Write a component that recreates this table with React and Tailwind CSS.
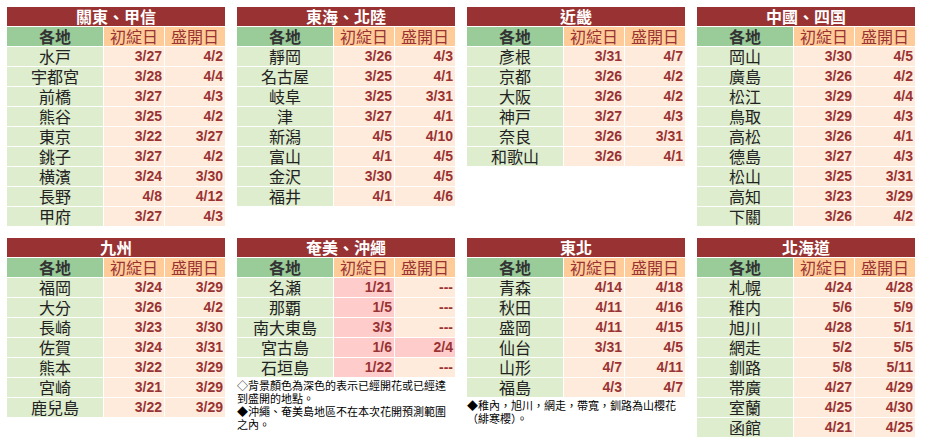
const REGIONS = [
  {
    title: '關東、甲信',
    rows: [
      ['水戸', '3/27', '4/2'],
      ['宇都宮', '3/28', '4/4'],
      ['前橋', '3/27', '4/3'],
      ['熊谷', '3/25', '4/2'],
      ['東京', '3/22', '3/27'],
      ['銚子', '3/27', '4/2'],
      ['横濱', '3/24', '3/30'],
      ['長野', '4/8', '4/12'],
      ['甲府', '3/27', '4/3'],
    ],
  },
  {
    title: '東海、北陸',
    rows: [
      ['靜岡', '3/26', '4/3'],
      ['名古屋', '3/25', '4/1'],
      ['岐阜', '3/25', '3/31'],
      ['津', '3/27', '4/1'],
      ['新潟', '4/5', '4/10'],
      ['富山', '4/1', '4/5'],
      ['金沢', '3/30', '4/5'],
      ['福井', '4/1', '4/6'],
    ],
  },
  {
    title: '近畿',
    rows: [
      ['彥根', '3/31', '4/7'],
      ['京都', '3/26', '4/2'],
      ['大阪', '3/26', '4/2'],
      ['神戸', '3/27', '4/3'],
      ['奈良', '3/26', '3/31'],
      ['和歌山', '3/26', '4/1'],
    ],
  },
  {
    title: '中國、四国',
    rows: [
      ['岡山', '3/30', '4/5'],
      ['廣島', '3/26', '4/2'],
      ['松江', '3/29', '4/4'],
      ['鳥取', '3/29', '4/3'],
      ['高松', '3/26', '4/1'],
      ['德島', '3/27', '4/3'],
      ['松山', '3/25', '3/31'],
      ['高知', '3/23', '3/29'],
      ['下關', '3/26', '4/2'],
    ],
  },
  {
    title: '九州',
    rows: [
      ['福岡', '3/24', '3/29'],
      ['大分', '3/26', '4/2'],
      ['長崎', '3/23', '3/30'],
      ['佐賀', '3/24', '3/31'],
      ['熊本', '3/22', '3/29'],
      ['宮崎', '3/21', '3/29'],
      ['鹿兒島', '3/22', '3/29'],
    ],
  },
  {
    title: '奄美、沖繩',
    rows: [
      ['名瀬', '1/21', '---', true, false],
      ['那覇', '1/5', '---', true, false],
      ['南大東島', '3/3', '---', true, false],
      ['宮古島', '1/6', '2/4', true, true],
      ['石垣島', '1/22', '---', true, false],
    ],
    notes: [
      '◇背景顏色為深色的表示已經開花或已經達到盛開的地點。',
      '◆沖繩、奄美島地區不在本次花開預測範圍之內。',
    ],
  },
  {
    title: '東北',
    rows: [
      ['青森', '4/14', '4/18'],
      ['秋田', '4/11', '4/16'],
      ['盛岡', '4/11', '4/15'],
      ['仙台', '3/31', '4/5'],
      ['山形', '4/7', '4/11'],
      ['福島', '4/3', '4/7'],
    ],
    notes: ['◆稚內，旭川，網走，帶寬，釧路為山櫻花（緋寒櫻）。'],
  },
  {
    title: '北海道',
    rows: [
      ['札幌', '4/24', '4/28'],
      ['稚内', '5/6', '5/9'],
      ['旭川', '4/28', '5/1'],
      ['網走', '5/2', '5/5'],
      ['釧路', '5/8', '5/11'],
      ['帯廣', '4/27', '4/29'],
      ['室蘭', '4/25', '4/30'],
      ['函館', '4/21', '4/25'],
    ],
  },
]

const CJK = "font-['Noto_Sans_CJK_TC','Noto_Sans_CJK_JP',sans-serif]"
const NUM = "font-['Liberation_Sans',Arial,sans-serif] font-bold text-[14px] text-[#993333] text-right pr-[2px] leading-[19px]"

function RegionTable({ title, rows, notes }) {
  return (
    <div className="w-[218px]">
      <div className="grid grid-cols-[96px_60px_60px] gap-px bg-white">
        <div className={`col-span-3 h-[19px] bg-[#993333] text-white text-[16px] font-bold leading-[19px] text-center ${CJK}`}>
          {title}
        </div>
        <div className={`h-[19px] bg-[#99cc99] text-[#333333] text-[16px] font-bold leading-[19px] text-center ${CJK}`}>各地</div>
        <div className={`h-[19px] bg-[#ffcc99] text-[#993333] text-[16px] leading-[19px] text-center ${CJK}`}>初綻日</div>
        <div className={`h-[19px] bg-[#ffcc99] text-[#993333] text-[16px] leading-[19px] text-center ${CJK}`}>盛開日</div>
        {rows.map(([name, start, full, hiStart, hiFull]) => (
          <div key={name} className="contents">
            <div className={`h-[19px] bg-[#ddedcd] text-[#222222] text-[16px] leading-[19px] text-center ${CJK}`}>{name}</div>
            <div className={`h-[19px] ${hiStart ? 'bg-[#ffcccc]' : 'bg-[#ffebdc]'} ${NUM}`}>{start}</div>
            <div className={`h-[19px] ${hiFull ? 'bg-[#ffcccc]' : 'bg-[#ffebdc]'} ${NUM}`}>{full}</div>
          </div>
        ))}
      </div>
      {notes && (
        <div className={`mt-[2px] text-[11px] leading-[13px] text-black ${CJK}`}>
          {notes.map((n) => (
            <p key={n}>{n}</p>
          ))}
        </div>
      )}
    </div>
  )
}

export default function App() {
  return (
    <div className="w-[926px] h-[446px] bg-white pl-[7px] pt-[7px] overflow-hidden">
      <div className="grid grid-cols-[218px_218px_218px_218px] gap-x-[12px] gap-y-[12px] items-start">
        {REGIONS.map((r) => (
          <RegionTable key={r.title} {...r} />
        ))}
      </div>
    </div>
  )
}
